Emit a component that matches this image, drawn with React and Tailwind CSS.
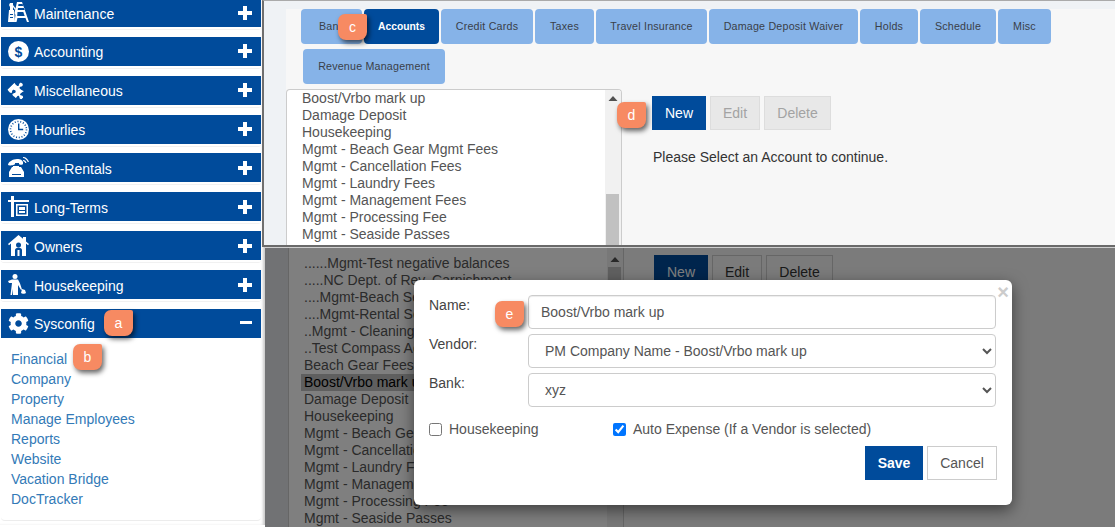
import React from "react";
import { FaCog, FaPuzzlePiece } from "react-icons/fa";

const Plus = () => (
  <svg width="14" height="14" viewBox="0 0 14 14" className="shrink-0"><path d="M5 0h4v5h5v4H9v5H5V9H0V5h5z" fill="#fff" /></svg>
);
const Minus = () => (
  <svg width="12" height="4" viewBox="0 0 12 4" className="shrink-0"><rect width="12" height="3" fill="#fff" /></svg>
);
const Svg = ({ children }) => (
  <svg width="21" height="21" viewBox="0 0 21 21" fill="#fff" className="shrink-0">{children}</svg>
);
const MaintIcon = () => (
  <Svg>
    <path d="M9 0h5l7 20h-2l-1.500-4H9.500L8.500 20h-2l1-7-1-2zM10.500 2l-.3 2h5l-.7-2zM10 6l-.3 2h7.500l-.7-2zM9.500 10l-.3 4h7.500l-1.400-4z" fillRule="evenodd" />
    <path d="M2 1h3v2l3 4-1 1-2-3v3h1l1 12H0l1-12h1V5L1 3z" />
    <path d="M2 12h3v1H2zM2 15h3v1H2z" fill="#004b9b" />
  </Svg>
);
const DollarIcon = () => (
  <Svg>
    <circle cx="10.500" cy="10.500" r="10.500" />
    <text x="10.500" y="15.500" textAnchor="middle" fontSize="14" fontWeight="700" fill="#004b9b" fontFamily="'Liberation Sans', sans-serif">$</text>
  </Svg>
);
const ClockIcon = () => (
  <Svg>
    <circle cx="10.500" cy="10.500" r="10.500" />
    <circle cx="10.500" cy="10.500" r="8" fill="none" stroke="#004b9b" strokeWidth="1.600" strokeDasharray="1 1.800" />
    <path d="M10 4.500h1.400v5.200h3.800v1.500H10z" fill="#004b9b" />
  </Svg>
);
const PhoneIcon = () => (
  <Svg>
    <path d="M0 8c0-3 5-6 9-6s5 1 6 3v2c0 1-4 1-4 0V6H7v1c0 1-6 2-7 1z" />
    <path d="M5 9h6v1h2l3 5v5H1v-5l3-5h1z" />
    <path d="M4 17h9v1H4z" fill="#004b9b" strokeDasharray="1 1" />
    <path d="M15 0c3 0 5 2 6 5h-1.200c-1-2-3-4-4.800-4zM15 3c2 0 3 1 3.500 3h-1.200c-.5-1-1.300-2-2.300-2z" />
  </Svg>
);
const SignIcon = () => (
  <Svg>
    <path d="M3 0h3v4h15v2H6v16H3V6H0V4h3z" />
    <path d="M8 8h12v12H8zM9.500 9.500v9h9v-9z" fillRule="evenodd" />
    <path d="M11 11h6v3h-6zM11 15h6v2h-6z" />
  </Svg>
);
const HouseIcon = () => (
  <Svg>
    <path d="M10.500 0L0 9l1 1.200L3 8.600V21h15V8.600l2 1.600L21 9l-3-2.600V2h-3v1.800z" />
    <path d="M7 21v-6c0-1.500 2-2.500 3.500-2.500S14 13.500 14 15v6z" fill="#004b9b" />
    <circle cx="10.500" cy="10" r="2.500" fill="#004b9b" />
    <path d="M9.500 15h2v6h-2z" />
  </Svg>
);
const KeeperIcon = () => (
  <Svg>
    <circle cx="7" cy="2.500" r="2.500" />
    <path d="M0 7l4-1.500h6l2 4 2 6-1 .5-3-5v10H5v-6l-1 6H2.500L4 9 1 9z" />
    <path d="M14 15l3 1 1 3c-1 1-4 1-5 0z" />
  </Svg>
);
const Puzzle = () => (
  <span className="w-[21px] h-[21px] shrink-0 flex items-center justify-center">
    <FaPuzzlePiece size={17} color="#fff" className="rotate-45" />
  </span>
);
const Cog = () => <FaCog size={21} color="#fff" className="shrink-0" />;

const sections = [
  ["Maintenance", MaintIcon],
  ["Accounting", DollarIcon],
  ["Miscellaneous", Puzzle],
  ["Hourlies", ClockIcon],
  ["Non-Rentals", PhoneIcon],
  ["Long-Terms", SignIcon],
  ["Owners", HouseIcon],
  ["Housekeeping", KeeperIcon],
];
const links = ["Financial", "Company", "Property", "Manage Employees", "Reports", "Website", "Vacation Bridge", "DocTracker"];

const Bar = ({ label, Icon, open }) => (
  <div className="h-[29px] bg-[#004b9b] flex items-center pl-[7px] pr-[9px] text-white text-[14px]">
    <Icon />
    <span className="ml-[5px] flex-1 pt-[3px]">{label}</span>
    {open ? <Minus /> : <Plus />}
  </div>
);

const Badge = ({ children, className }) => (
  <div className={"absolute z-30 w-[29px] h-[26px] bg-[#f78a62] text-white text-[14px] flex items-center justify-center rounded-tl-[7px] rounded-bl-[8px] rounded-br-[8px] rounded-tr-[2px] shadow-[2px_3px_5px_rgba(0,0,0,0.6)] " + className}>
    {children}
  </div>
);

const tabs = [
  ["Bank", "w-[61px]"],
  ["Accounts", "w-[75px]", true],
  ["Credit Cards", "w-[92px]"],
  ["Taxes", "w-[59px]"],
  ["Travel Insurance", "w-[111px]"],
  ["Damage Deposit Waiver", "w-[149px]"],
  ["Holds", "w-[58px]"],
  ["Schedule", "w-[76px]"],
  ["Misc", "w-[53px]"],
];

const Tab = ({ label, w, active }) => (
  <div className={"h-[35px] rounded-[4px] flex items-center justify-center shrink-0 " + w + " " + (active ? "bg-[#004b9b] text-white font-bold text-[10.300px]" : "bg-[#86b3e8] text-[#3a4048] text-[10.700px] tracking-[0.200px]")}>
    {label}
  </div>
);

const topItems = ["Boost/Vrbo mark up", "Damage Deposit", "Housekeeping", "Mgmt - Beach Gear Mgmt Fees", "Mgmt - Cancellation Fees", "Mgmt - Laundry Fees", "Mgmt - Management Fees", "Mgmt - Processing Fee", "Mgmt - Seaside Passes"];
const lowerItems = ["......Mgmt-Test negative balances", ".....NC Dept. of Rev. Carnishment", "....Mgmt-Beach Services", "....Mgmt-Rental Services", "..Mgmt - Cleaning Fees", "..Test Compass Account", "Beach Gear Fees", "Boost/Vrbo mark up", "Damage Deposit", "Housekeeping", "Mgmt - Beach Gear Mgmt Fees", "Mgmt - Cancellation Fees", "Mgmt - Laundry Fees", "Mgmt - Management Fees", "Mgmt - Processing Fee", "Mgmt - Seaside Passes"];

const Arrow = () => (
  <svg width="10" height="6" viewBox="0 0 10 6" className="mx-auto shrink-0"><path d="M5 0l4.500 5H.5z" fill="#505050" /></svg>
);

const ListItem = ({ children, selected }) => (
  <div className={"h-[17px] leading-[17px] px-[3px] whitespace-nowrap text-[14px] " + (selected ? "bg-[#bfbfbf] text-black" : "text-[#555]")}>{children}</div>
);

const Field = ({ label, children }) => (
  <div className="flex mb-[5px]">
    <div className="w-[99px] text-[14px] text-[#444] leading-[20px]">{label}</div>
    {children}
  </div>
);

export default function App() {
  return (
    <div className="relative w-[1115px] h-[527px] overflow-hidden flex bg-white font-['Liberation_Sans',Arial,sans-serif]">
      <aside className="w-[265px] shrink-0 h-full bg-white pl-[1px] pr-[4px] -mt-[2px] flex flex-col gap-[9.860px] shadow-[inset_-3px_0_3px_-1px_rgba(0,0,0,0.22)]">
        {sections.map(([label, Icon]) => (
          <div key={label} className="h-[29px]">
            <Bar label={label} Icon={Icon} />
            <div className="h-[3px] rounded-b-[3px] border-b border-[#f1f1f1]" />
          </div>
        ))}
        <div className="rounded-b-[4px] border-b border-[#ececec]">
          <Bar label="Sysconfig" Icon={Cog} open />
          <div className="pl-[10px] py-[11px]">
            {links.map((l) => (
              <div key={l} className="h-[20px] leading-[20px] text-[14px] text-[#337ab7]">{l}</div>
            ))}
          </div>
        </div>
      </aside>

      <main className="flex-1 min-w-0 flex flex-col">
        <section className="relative z-10 -ml-[3px] h-[247px] shrink-0 overflow-hidden flex flex-col border-l-[2px] border-l-[#6f6f6f] border-t border-t-[#aaa] border-b-[2px] border-b-[#6a6a6a] bg-[#eff2f5] pt-[8px] pl-[22px]">
          <div className="bg-[#f7f7f7] flex-1 min-h-0 flex flex-col">
            <div className="pl-[15px] flex gap-[2px]">
              {tabs.map(([l, w, a]) => <Tab key={l} label={l} w={w} active={a} />)}
            </div>
            <div className="pl-[17px] mt-[5px]"><Tab label="Revenue Management" w="w-[142px]" /></div>
            <div className="flex flex-1 min-h-0 mt-[5px]">
              <div className="w-[336px] shrink-0 bg-white border border-[#ccc] rounded-t-[4px] border-b-0 flex overflow-hidden">
                <div className="flex-1 pl-[12px]">
                  {topItems.map((t) => <ListItem key={t}>{t}</ListItem>)}
                </div>
                <div className="w-[16px] bg-[#f1f1f1] flex flex-col pt-[6px] pr-[2px] pl-[1px]">
                  <Arrow />
                  <div className="mt-auto h-[51px] bg-[#c1c1c1]" />
                </div>
              </div>
              <div className="pl-[30px] pt-[7px]">
                <div className="flex gap-[4px]">
                  <div className="w-[54px] h-[34px] bg-[#004b9b] text-white text-[14px] flex items-center justify-center">New</div>
                  <div className="w-[50px] h-[34px] bg-[#e8e8e8] border border-[#ddd] text-[#a3a3a3] text-[14px] flex items-center justify-center">Edit</div>
                  <div className="w-[67px] h-[34px] bg-[#e8e8e8] border border-[#ddd] text-[#a3a3a3] text-[14px] flex items-center justify-center">Delete</div>
                </div>
                <p className="mt-[17px] ml-[1px] text-[14px] leading-[20px] text-[#333]">Please Select an Account to continue.</p>
              </div>
            </div>
          </div>
        </section>

        <section className="relative flex-1 min-h-0 overflow-hidden bg-[#e2e5e8] border-t border-[#cfcfcf] pl-[23px]">
          <div className="bg-[#f7f7f7] h-full flex">
            <div className="w-[336px] shrink-0 bg-white border-l border-r border-[#ccc] flex overflow-hidden">
              <div className="flex-1 pl-[12px] pt-[7px]">
                {lowerItems.map((t) => <ListItem key={t} selected={t === "Boost/Vrbo mark up"}>{t}</ListItem>)}
              </div>
              <div className="w-[16px] bg-[#f1f1f1] flex flex-col pt-[9px] pr-[2px] pl-[1px]">
                <Arrow />
                <div className="mt-[4px] h-[60px] bg-[#c1c1c1]" />
              </div>
            </div>
            <div className="pl-[30px] pt-[7px]">
              <div className="flex gap-[4px]">
                <div className="w-[54px] h-[34px] bg-[#004b9b] text-white text-[14px] flex items-center justify-center">New</div>
                <div className="w-[50px] h-[34px] bg-[#f7f7f7] border border-[#ccc] text-[#333] text-[14px] flex items-center justify-center">Edit</div>
                <div className="w-[67px] h-[34px] bg-[#f7f7f7] border border-[#ccc] text-[#333] text-[14px] flex items-center justify-center">Delete</div>
              </div>
            </div>
          </div>

          <div className="absolute inset-0 bg-black/50" />

          <div className="absolute left-[149px] top-[32px] w-[598px] h-[225px] bg-white rounded-[6px] shadow-[0_5px_15px_rgba(0,0,0,0.5)] pl-[15px] pr-[16px] pt-[15px]">
            <span className="absolute right-[3px] top-[2px] text-[#ccc] text-[20px] leading-[20px] font-bold">×</span>
            <Field label="Name:">
              <input readOnly value="Boost/Vrbo mark up" className="flex-1 min-w-0 h-[34px] border border-[#ccc] rounded-[4px] px-[12px] text-[14px] text-[#555] shadow-[inset_0_1px_1px_rgba(0,0,0,0.075)] outline-none" />
            </Field>
            <Field label="Vendor:">
              <select defaultValue="a" className="flex-1 min-w-0 h-[34px] border border-[#ccc] rounded-[4px] px-[12px] text-[14px] text-[#555] bg-white">
                <option value="a">PM Company Name - Boost/Vrbo mark up</option>
              </select>
            </Field>
            <Field label="Bank:">
              <select defaultValue="x" className="flex-1 min-w-0 h-[34px] border border-[#ccc] rounded-[4px] px-[12px] text-[14px] text-[#555] bg-white">
                <option value="x">xyz</option>
              </select>
            </Field>
            <div className="flex mt-[12px] h-[20px] items-center text-[14px] text-[#555]">
              <label className="w-[184px] flex items-center">
                <input type="checkbox" className="w-[13px] h-[13px] m-0" />
                <span className="ml-[7px]">Housekeeping</span>
              </label>
              <label className="flex items-center">
                <input type="checkbox" defaultChecked className="w-[13px] h-[13px] m-0" />
                <span className="ml-[7px]">Auto Expense (If a Vendor is selected)</span>
              </label>
            </div>
            <div className="flex justify-end gap-[4px] mt-[7px] -mr-[1px]">
              <div className="w-[58px] h-[34px] bg-[#004b9b] text-white text-[14px] font-bold flex items-center justify-center">Save</div>
              <div className="w-[70px] h-[34px] bg-white border border-[#ccc] text-[#555] text-[14px] flex items-center justify-center">Cancel</div>
            </div>
          </div>
        </section>
      </main>

      <Badge className="left-[104px] top-[310px]">a</Badge>
      <Badge className="left-[73px] top-[344px]">b</Badge>
      <Badge className="left-[338px] top-[14px]">c</Badge>
      <Badge className="left-[617px] top-[102px]">d</Badge>
      <Badge className="left-[495px] top-[301px]">e</Badge>
    </div>
  );
}
